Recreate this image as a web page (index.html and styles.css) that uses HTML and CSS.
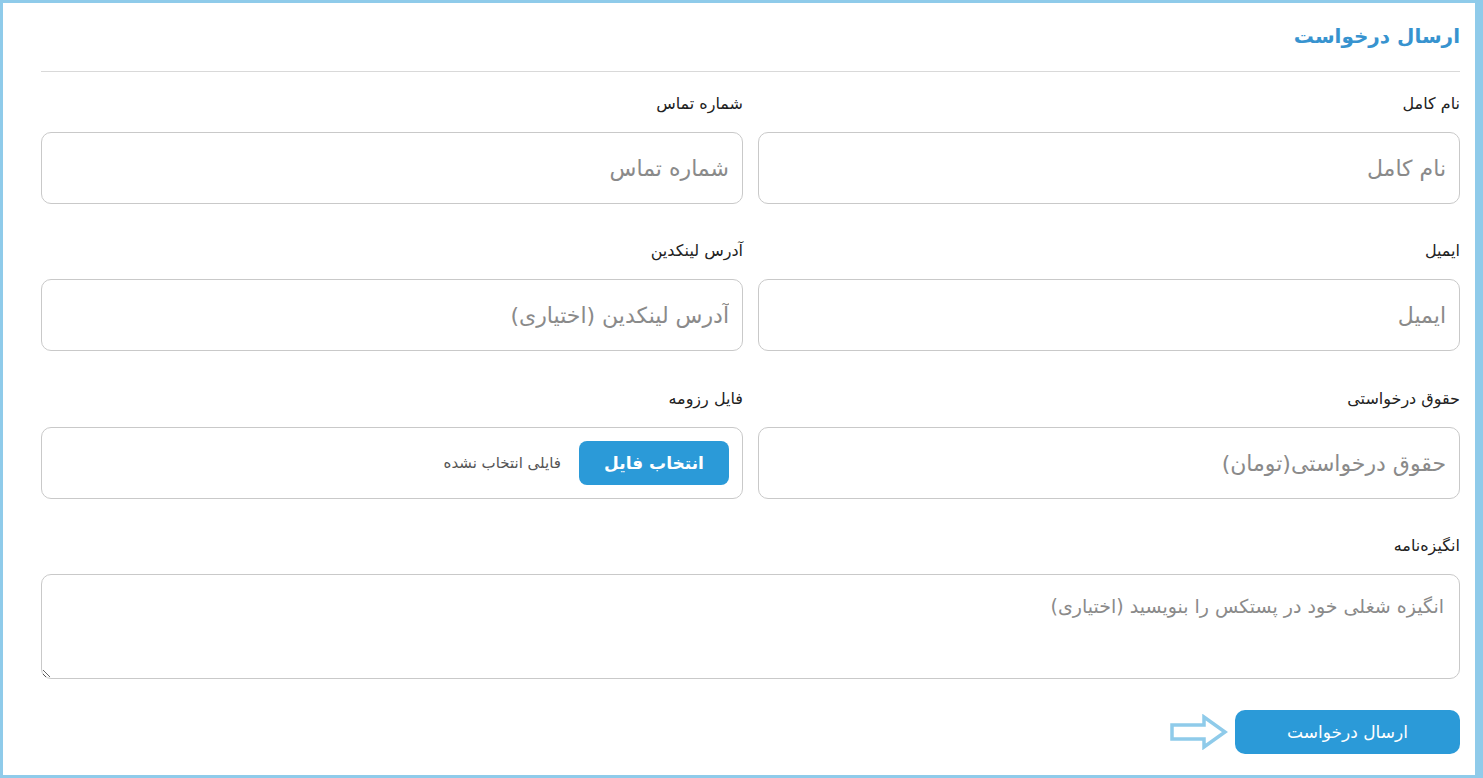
FILE: index.html
```html
<!DOCTYPE html>
<html lang="fa" dir="rtl">
<head>
    <meta charset="UTF-8">
    <meta name="viewport" content="width=device-width, initial-scale=1.0">
    <title>ارسال درخواست</title>
    <link rel="stylesheet" href="styles.css">
</head>
<body>
    <div class="page">
        <div class="form-header">
            <h1>ارسال درخواست</h1>
        </div>

        <form class="apply-form" onsubmit="return false;">
            <div class="form-grid">
                <div class="field">
                    <label for="fullName">نام کامل</label>
                    <input type="text" id="fullName" placeholder="نام کامل">
                </div>
                <div class="field">
                    <label for="phone">شماره تماس</label>
                    <input type="text" id="phone" placeholder="شماره تماس">
                </div>

                <div class="field">
                    <label for="email">ایمیل</label>
                    <input type="email" id="email" placeholder="ایمیل">
                </div>
                <div class="field">
                    <label for="linkedin">آدرس لینکدین</label>
                    <input type="text" id="linkedin" placeholder="آدرس لینکدین (اختیاری)">
                </div>

                <div class="field field-row3">
                    <label for="salary">حقوق درخواستی</label>
                    <input type="text" id="salary" placeholder="حقوق درخواستی(تومان)">
                </div>
                <div class="field field-row3">
                    <label>فایل رزومه</label>
                    <div class="file-box">
                        <input type="file" id="resume" class="file-input">
                        <label for="resume" class="file-button">انتخاب فایل</label>
                        <span class="file-name" id="fileName">فایلی انتخاب نشده</span>
                    </div>
                </div>

                <div class="field field-wide">
                    <label for="motivation">انگیزه‌نامه</label>
                    <textarea id="motivation" placeholder="انگیزه شغلی خود در پستکس را بنویسید (اختیاری)"></textarea>
                </div>
            </div>

            <div class="form-actions">
                <button type="submit" class="submit-button">ارسال درخواست</button>
                <svg class="submit-arrow" width="58" height="36" viewBox="0 0 58 36">
                    <path d="M2 11 H34 V3 L55 18 L34 33 V25 H2 Z" fill="none" stroke="#8fcbea" stroke-width="3.5" stroke-linejoin="miter"/>
                </svg>
            </div>
        </form>
    </div>

    <script>
        document.getElementById('resume').addEventListener('change', function () {
            const name = this.files.length ? this.files[0].name : 'فایلی انتخاب نشده';
            document.getElementById('fileName').textContent = name;
        });
    </script>
</body>
</html>
```

FILE: styles.css
```css
/* General styles */
* {
    box-sizing: border-box;
}

body {
    margin: 0;
    font-family: "DejaVu Sans", sans-serif;
    background-color: #fff;
    color: #222;
}

.page {
    height: 778px;
    border: 3px solid #8fcbea;
    border-right-width: 8px;
    padding: 0 15px 0 38px;
    background-color: #fff;
}

.form-header {
    padding-top: 17px;
    padding-bottom: 19px;
    border-bottom: 1px solid #d9d9d9;
}

.form-header h1 {
    margin: 0;
    font-size: 20px;
    line-height: 32px;
    font-weight: bold;
    color: #3793cf;
}

.apply-form {
    padding-top: 20px;
}

.form-grid {
    display: grid;
    grid-template-columns: 1fr 1fr;
    column-gap: 15px;
    row-gap: 35px;
}

.field label {
    display: block;
    font-size: 16px;
    line-height: 24px;
    margin-bottom: 16px;
    color: #222;
}

.field-row3 {
    padding-top: 1px;
}

.field input[type="text"],
.field input[type="email"] {
    display: block;
    width: 100%;
    height: 72px;
    padding: 0 13px;
    font-family: inherit;
    font-size: 22px;
    color: #333;
    border: 1px solid #c9c9c9;
    border-radius: 10px;
    outline: none;
}

.field input::placeholder,
.field textarea::placeholder {
    color: #8a8a8a;
}

.field-wide {
    grid-column: 1 / -1;
}

.field-wide label {
    margin-bottom: 16px;
}

.field textarea {
    display: block;
    width: 100%;
    height: 105px;
    padding: 16px 15px;
    font-family: inherit;
    font-size: 19px;
    line-height: 30px;
    color: #333;
    border: 1px solid #c9c9c9;
    border-radius: 10px;
    outline: none;
    resize: vertical;
}

/* Custom file picker */
.file-box {
    display: flex;
    align-items: center;
    gap: 18px;
    height: 72px;
    padding: 0 13px;
    border: 1px solid #c9c9c9;
    border-radius: 10px;
}

.file-input {
    display: none;
}

.field .file-button {
    display: flex;
    align-items: center;
    justify-content: center;
    width: 150px;
    height: 44px;
    margin: 0;
    background-color: #2b9ad8;
    color: #fff;
    font-size: 17px;
    font-weight: bold;
    border-radius: 8px;
    cursor: pointer;
}

.file-name {
    font-size: 15px;
    color: #555;
}

.form-actions {
    display: flex;
    align-items: center;
    gap: 7px;
    margin-top: 31px;
}

.submit-button {
    width: 225px;
    height: 44px;
    background-color: #2b9ad8;
    color: #fff;
    border: none;
    border-radius: 10px;
    font-family: inherit;
    font-size: 17px;
    cursor: pointer;
}

.submit-button:hover {
    background-color: #2389c4;
}

.submit-arrow {
    display: block;
}
```
